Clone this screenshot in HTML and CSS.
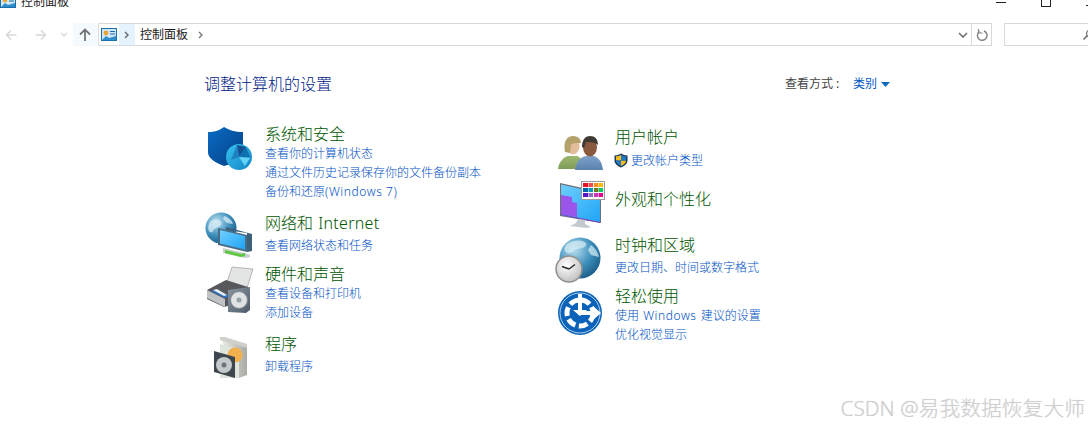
FILE: index.html
```html
<!DOCTYPE html>
<html lang="zh-CN">
<head>
<meta charset="utf-8">
<title>控制面板</title>
<link rel="stylesheet" href="styles.css">
</head>
<body>
<svg class="defs" width="0" height="0">
  <defs>
    <linearGradient id="gShield" x1="0" y1="0" x2="1" y2="1"><stop offset="0" stop-color="#0a6cc4"/><stop offset="1" stop-color="#043f86"/></linearGradient>
    <linearGradient id="gPie" x1="0" y1="0" x2="1" y2="1"><stop offset="0" stop-color="#39c0ee"/><stop offset="1" stop-color="#1285c8"/></linearGradient>
    <radialGradient id="gGlobe" cx=".35" cy=".3" r=".8"><stop offset="0" stop-color="#b9e0ef"/><stop offset=".55" stop-color="#3e8fbd"/><stop offset="1" stop-color="#14567f"/></radialGradient>
    <linearGradient id="gScreen" x1="0" y1="0" x2="1" y2="1"><stop offset="0" stop-color="#6fcfff"/><stop offset="1" stop-color="#1fa4f5"/></linearGradient>
    <linearGradient id="gMetal" x1="0" y1="0" x2="1" y2="1"><stop offset="0" stop-color="#8a97a3"/><stop offset="1" stop-color="#4d5a68"/></linearGradient>
    <linearGradient id="gBox" x1="0" y1="0" x2="1" y2="0"><stop offset="0" stop-color="#f0f0ea"/><stop offset="1" stop-color="#a9aaa4"/></linearGradient>
    <radialGradient id="gClock" cx=".4" cy=".35" r=".8"><stop offset="0" stop-color="#fff"/><stop offset="1" stop-color="#b4b4b4"/></radialGradient>
    <linearGradient id="gGreenShirt" x1="0" y1="0" x2="0" y2="1"><stop offset="0" stop-color="#9db770"/><stop offset="1" stop-color="#7f9d58"/></linearGradient>
    <linearGradient id="gBlueShirt" x1="0" y1="0" x2="0" y2="1"><stop offset="0" stop-color="#7ea1c9"/><stop offset="1" stop-color="#5b82ad"/></linearGradient>
  </defs>
</svg>

<header class="titlebar">
  <div class="title-left">
    <svg class="cp-icon" viewBox="0 0 16 13"><rect x=".5" y=".5" width="15" height="12" fill="#cfe6f7" stroke="#1c6ea8"/><circle cx="5" cy="5" r="2.4" fill="#e9a531"/><path d="M9 3h5M9 6h5" stroke="#1c6ea8"/><path d="M1 12l4-4 3 2 7-2v4z" fill="#2f8fce"/></svg>
    <span>控制面板</span>
  </div>
  <div class="win-controls">
    <span class="win-min"></span>
    <span class="win-max"></span>
    <span class="win-close"></span>
  </div>
</header>

<nav class="navbar">
  <svg class="nav-arrow" viewBox="0 0 12 12"><path d="M11.5 6H1.500M6 1.500L1.500 6 6 10.500" fill="none" stroke="#d9d9d9" stroke-width="1.600"/></svg>
  <svg class="nav-arrow fwd" viewBox="0 0 12 12"><path d="M.5 6h10M6 1.500L10.500 6 6 10.500" fill="none" stroke="#d9d9d9" stroke-width="1.600"/></svg>
  <svg class="nav-drop" viewBox="0 0 8 5"><path d="M1 1l3 3 3-3" fill="none" stroke="#d5d5d5" stroke-width="1.200"/></svg>
  <div class="nav-up"><svg viewBox="0 0 12 13" width="12" height="13"><path d="M6 13V2M1 6.500L6 1.500l5 5" fill="none" stroke="#747474" stroke-width="1.800"/></svg></div>
  <div class="address">
    <svg class="addr-icon" viewBox="0 0 16 13"><rect x=".5" y=".5" width="15" height="12" fill="#cfe6f7" stroke="#1c6ea8"/><circle cx="5" cy="5" r="2.400" fill="#e9a531"/><path d="M9 3.500h5M9 6h5" stroke="#1c6ea8"/><path d="M1 12l4-4 3 2 7-2v4z" fill="#2f8fce"/></svg>
    <div class="crumb-sep"><svg viewBox="0 0 5 8" width="5" height="8"><path d="M1 1l3 3-3 3" fill="none" stroke="#666" stroke-width="1.400"/></svg></div>
    <span class="crumb">控制面板</span>
    <svg class="crumb-end" viewBox="0 0 5 8" width="5" height="8"><path d="M1 1l3 3-3 3" fill="none" stroke="#777" stroke-width="1.400"/></svg>
    <svg class="addr-drop" viewBox="0 0 10 6" width="10" height="6"><path d="M1 1l4 4 4-4" fill="none" stroke="#707070" stroke-width="1.600"/></svg>
    <div class="addr-refresh"><svg viewBox="0 0 12 12" width="12" height="12"><path d="M3.500 2.500A4.800 4.800 0 1 0 8 2" fill="none" stroke="#808080" stroke-width="1.400"/><path d="M2.500 0v4h4" fill="none" stroke="#808080" stroke-width="1.200"/></svg></div>
  </div>
  <div class="search"><svg class="search-ico" viewBox="0 0 10 10" width="10" height="10"><circle cx="6.500" cy="3.500" r="3" fill="none" stroke="#808080" stroke-width="1.400"/><path d="M4.500 5.500L.5 9.500" stroke="#808080" stroke-width="1.800"/></svg></div>
</nav>

<main class="panel">
  <div class="panel-head">
    <h1>调整计算机的设置</h1>
    <div class="view-by">
      <span class="view-label">查看方式<span class="colon">:</span></span>
      <a class="view-value">类别</a>
      <svg class="view-arrow" viewBox="0 0 9 5" width="9" height="5"><path d="M0 0h9L4.500 5z" fill="#0f6cbd"/></svg>
    </div>
  </div>

  <div class="columns">
    <div class="col col-left">
      <section class="item i-security">
        <svg class="ico" viewBox="0 0 60 48">
          <path d="M3 8c7 0 12-2 16-5 5 3 11 5 19 5v20c0 7-7 11-19 14C9 38 3 34 3 28z" fill="url(#gShield)"/>
          <circle cx="34" cy="33" r="13" fill="url(#gPie)"/>
          <path d="M34 33l-2-12 9 2z" fill="#12508f"/>
          <path d="M34 33l-8 3 6-15z" fill="#1f80c0"/>
          <path d="M34 33l7-10 4 10z" fill="#0f6fb0"/>
          <path d="M34 33l11 1-5 8z" fill="#65d3f3"/>
        </svg>
        <div class="txt">
          <h2>系统和安全</h2>
          <a>查看你的计算机状态</a>
          <a>通过文件历史记录保存你的文件备份副本</a>
          <a>备份和还原<span class="lat">(Windows 7)</span></a>
        </div>
      </section>
      <section class="item i-network">
        <svg class="ico" viewBox="0 0 60 48">
          <circle cx="16" cy="15" r="15.500" fill="url(#gGlobe)"/>
          <path d="M6 8c4-3 8-2 10 1s-2 5-5 6-3 6-6 4-2-8 1-11zM19 3c4 1 8 4 9 8l-6-1-4-4z" fill="#d8eef5" opacity=".75"/>
          <path d="M21 14l26 7v17l-5 1V20l-21-3z" fill="#3c6178"/>
          <path d="M13 15l29 7v17L13 32z" fill="#4a6d85"/>
          <path d="M15 17l25 6v13.500l-25-6z" fill="url(#gScreen)"/>
          <path d="M18 35l22 5 5 2v2l-5 1-22-5z" fill="#c9ced1"/>
          <path d="M20 37l16 4 4-1v3l-4 1-16-4z" fill="#5cc83e"/>
        </svg>
        <div class="txt">
          <h2>网络和<span class="sp"> </span><span class="lat-title">Internet</span></h2>
          <a>查看网络状态和任务</a>
        </div>
      </section>
      <section class="item i-hardware">
        <svg class="ico" viewBox="0 0 60 48">
          <path d="M27 3l21 2-6 19-21-3z" fill="#e3e5e5" stroke="#8d8d8d" stroke-width=".6"/>
          <path d="M2 26l19-10 22 7v14l-24 6-17-8z" fill="#56585c"/>
          <path d="M2 26l18 9v8L2 34z" fill="#bfc2c4"/>
          <path d="M6 27l14 7 5-2-14-6z" fill="#2a72c6"/>
          <path d="M8 26l11 6 3-1-10-6z" fill="#e7eef5"/>
          <path d="M23 26l22-3v23l-4 3-18-1z" fill="url(#gMetal)"/>
          <circle cx="34" cy="36" r="8.500" fill="#dfe3e4" stroke="#7d858c"/>
          <circle cx="34" cy="36" r="2.500" fill="#98a1a8"/>
        </svg>
        <div class="txt">
          <h2>硬件和声音</h2>
          <a>查看设备和打印机</a>
          <a>添加设备</a>
        </div>
      </section>
      <section class="item i-programs">
        <svg class="ico" viewBox="0 0 60 48">
          <path d="M15 3l27 8v30l-8 3z" fill="url(#gBox)"/>
          <path d="M15 3l5 0 22 7v4L15 6z" fill="#cfd0cb"/>
          <path d="M15 10l19 5v29H15z" fill="#dfe5dc"/>
          <circle cx="30" cy="21" r="7.500" fill="#f2b04f"/>
          <path d="M9 17l21 6v21L9 38z" fill="#3f474e"/>
          <circle cx="19" cy="31" r="8" fill="#c4c9cb"/>
          <circle cx="19" cy="31" r="2.500" fill="#6b7278"/>
        </svg>
        <div class="txt">
          <h2>程序</h2>
          <a>卸载程序</a>
        </div>
      </section>
    </div>

    <div class="col col-right">
      <section class="item i-users">
        <svg class="ico" viewBox="0 0 60 48">
          <path d="M3 42c1-8 6-12 10-13h9c5 2 7 6 8 13z" fill="url(#gGreenShirt)"/>
          <ellipse cx="18" cy="19" rx="6.500" ry="8.500" fill="#e2bd9b"/>
          <path d="M10 25c-2-11 2-16 8-16 6 0 8 4 8 7-5 0-9 0-10 2l-1 8z" fill="#b5a16a"/>
          <path d="M20 43c1-9 6-13 11-14h8c5 2 8 6 9 14z" fill="url(#gBlueShirt)"/>
          <ellipse cx="35" cy="20" rx="7" ry="9.500" fill="#8a5a3f"/>
          <path d="M27 20c0-8 4-11 8-11 5 0 8 3 8 9-3-3-8-3-12-3l-2 6z" fill="#403a34"/>
        </svg>
        <div class="txt">
          <h2>用户帐户</h2>
          <a class="uac"><svg viewBox="0 0 14 15" width="14" height="15"><path d="M7 .5c2 1.200 4 2 6.500 2v5c0 3.500-3 5.500-6.500 7C3.500 13 .5 11 .5 7.500v-5C3 2.500 5 1.700 7 .5z" fill="#1e3c5c"/><path d="M7 2v5.500H2V3.300C4 3.300 5.500 2.800 7 2zM7 7.500h5c0 2.800-2.500 4.300-5 5.500z" fill="#f6bd1c"/><path d="M7 2c1.500.8 3 1.300 5 1.300v4.200H7zM7 7.500V13C4.500 11.800 2 10.300 2 7.500z" fill="#1f78c8"/></svg><span>更改帐户类型</span></a>
        </div>
      </section>
      <section class="item i-appearance">
        <svg class="ico" viewBox="0 0 60 48">
          <path d="M5 -6l41 9v31L5 27z" fill="#6c7276"/>
          <path d="M6 -4.500l39 8.500v29L6 26z" fill="url(#gScreen)"/>
          <path d="M6 6l11 2v5l5 1v14L6 25z" fill="#9a55ea"/>
          <path d="M6 25l39 8v1L6 26z" fill="#7b3fd0"/>
          <path d="M23 30l7 1v4l6 3-4 1-17-2 6-3z" fill="#c2cad0"/>
          <rect x="26.500" y="-7.500" width="23" height="18" fill="#fff" stroke="#9c9c9c"/>
          <g class="swatches">
            <rect x="28" y="-6" width="5" height="4" fill="#e81123"/><rect x="33.500" y="-6" width="4.500" height="4" fill="#f04b4b"/><rect x="39" y="-6" width="4.500" height="4" fill="#f7901e"/><rect x="44" y="-6" width="4" height="4" fill="#fbb900"/>
            <rect x="28" y="-1" width="5" height="4" fill="#0063b1"/><rect x="33.500" y="-1" width="4.500" height="4" fill="#0099bc"/><rect x="39" y="-1" width="4.500" height="4" fill="#6b7a1a"/><rect x="44" y="-1" width="4" height="4" fill="#00cc6a"/>
            <rect x="28" y="4" width="5" height="4" fill="#5a13c8"/><rect x="33.500" y="4" width="4.500" height="4" fill="#8e6cc0"/><rect x="39" y="4" width="4.500" height="4" fill="#c239b3"/><rect x="44" y="4" width="4" height="4" fill="#e3008c"/>
          </g>
        </svg>
        <div class="txt">
          <h2>外观和个性化</h2>
        </div>
      </section>
      <section class="item i-clock">
        <svg class="ico" viewBox="0 0 60 48">
          <circle cx="25" cy="23" r="20.500" fill="url(#gGlobe)"/>
          <path d="M12 9c6-4 14-5 19-1 2 4-5 6-9 6s-4 5-9 4-4-6-1-9zM36 10c4 3 7 7 8 12l-8-2-3-5z" fill="#d8eef5" opacity=".7"/>
          <circle cx="14" cy="34" r="13" fill="url(#gClock)" stroke="#8f8f8f" stroke-width="1.500"/>
          <path d="M14 34l-7-2.500M14 34l6-4.500" stroke="#2b2b2b" stroke-width="1.500" fill="none"/>
        </svg>
        <div class="txt">
          <h2>时钟和区域</h2>
          <a>更改日期、时间或数字格式</a>
        </div>
      </section>
      <section class="item i-ease">
        <svg class="ico" viewBox="0 0 60 48">
          <circle cx="25" cy="27" r="22" fill="#0a63b8"/>
          <circle cx="25" cy="27" r="20" fill="none" stroke="#d8e8f6" stroke-width=".8"/>
          <circle cx="25" cy="27" r="13" fill="none" stroke="#fff" stroke-width="5" stroke-dasharray="9 3.500"/>
          <path d="M25 8v19h15" fill="none" stroke="#fff" stroke-width="4"/>
          <path d="M38 20l8 7-8 7zM18 24l7 6 7-6z" fill="#fff"/>
        </svg>
        <div class="txt">
          <h2>轻松使用</h2>
          <a>使用<span class="sp"> </span><span class="lat">Windows</span><span class="sp"> </span>建议的设置</a>
          <a>优化视觉显示</a>
        </div>
      </section>
    </div>
  </div>
</main>

<div class="watermark">CSDN @易我数据恢复大师</div>
</body>
</html>
```

FILE: styles.css
```css
* { box-sizing: border-box; }
html, body { margin: 0; padding: 0; }
body {
  width: 1088px;
  height: 426px;
  overflow: hidden;
  position: relative;
  background: #fff;
  font-family: "Noto Sans", "Noto Sans CJK SC", sans-serif;
  font-size: 12px;
  color: #1a1a1a;
}
.defs { position: absolute; }

/* title bar, cut off by the top edge */
.titlebar {
  height: 10px;
  overflow: hidden;
  display: flex;
  justify-content: space-between;
}
.title-left {
  display: flex;
  align-items: center;
  gap: 5px;
  height: 12px;
  margin-top: -4px;
  line-height: 12px;
}
.cp-icon { width: 16px; height: 13px; margin-top: -1px; flex: none; }
.win-controls { display: flex; align-items: flex-start; }
.win-min { width: 10px; height: 1px; margin-top: 2px; margin-right: 35px; background: #222; }
.win-max { width: 10px; height: 7px; border: 1px solid #222; border-top: 0; margin-right: 35px; }
.win-close { width: 2px; height: 1px; margin-top: 5px; background: #222; }

/* navigation bar */
.navbar {
  height: 23px;
  margin-top: 13px;
  display: flex;
  align-items: center;
}
.nav-arrow { width: 12px; height: 12px; margin-left: 5px; }
.nav-arrow.fwd { margin-left: 18px; }
.nav-drop { width: 8px; height: 5px; margin-left: 13px; }
.nav-up {
  width: 24px;
  height: 23px;
  margin-left: 5px;
  background: #f5faff;
  display: flex;
  align-items: center;
  justify-content: center;
}
.address {
  width: 895px;
  height: 23px;
  margin-left: 1px;
  border: 1px solid #d9d9d9;
  display: flex;
  align-items: center;
}
.addr-icon { width: 16px; height: 13px; margin-left: 2px; flex: none; }
.crumb-sep {
  width: 16px;
  height: 21px;
  margin-left: 2px;
  background: #e5f3ff;
  display: flex;
  align-items: center;
  justify-content: center;
}
.crumb { margin-left: 5px; line-height: 21px; color: #1a1a1a; }
.crumb-end { margin-left: 10px; }
.addr-drop { margin-left: auto; margin-right: 3px; }
.addr-refresh {
  width: 20px;
  height: 21px;
  border-left: 1px solid #d9d9d9;
  display: flex;
  align-items: center;
  justify-content: center;
}
.search {
  width: 84px;
  height: 23px;
  margin-left: 12px;
  border: 1px solid #d9d9d9;
  border-right: 0;
  display: flex;
  align-items: center;
  justify-content: flex-end;
  overflow: hidden;
}
.search-ico { flex: none; margin-right: -5px; }

/* main panel */
.panel { padding: 27px 0 0 205px; }
.panel-head {
  width: 685px;
  height: 22px;
  display: flex;
  justify-content: space-between;
  align-items: center;
}
h1 {
  margin: 0 0 0 -1px;
  font-size: 16px;
  font-weight: 300;
  line-height: 22px;
  color: #002288;
}
.view-by { display: flex; align-items: center; }
.view-label { width: 68px; color: #444; line-height: 18px; font-size: 12px; }
.colon { margin-left: 3px; }
.view-value { color: #0058c4; line-height: 18px; }
.view-arrow { margin-left: 4px; }

.columns {
  display: flex;
  margin-top: 29px;
}
.col { display: flex; flex-direction: column; }
.col-left { width: 350px; }
.col-right { padding-top: 3px; }

.item { display: flex; }
.ico {
  width: 60px;
  height: 48px;
  margin-bottom: -48px;
  flex: none;
  overflow: visible;
}
.txt { display: flex; flex-direction: column; }
h2 {
  margin: 0;
  font-size: 16px;
  font-weight: 300;
  line-height: 20px;
  color: #005500;
}
.txt a {
  color: #0052c4;
  line-height: 19px;
  white-space: nowrap;
  font-weight: 300;
}
.lat { letter-spacing: .6px; }
.lat-title { letter-spacing: .3px; }
.sp { padding-left: 1px; }
.uac { display: flex; align-items: center; margin-left: -1px; margin-top: 4px; }
.uac span { margin-left: 3px; }

/* vertical rhythm of the category lists */
.i-network { margin-top: 12px; }
.i-network h2 { margin-bottom: 3px; }
.i-hardware { margin-top: 9px; }
.i-programs { margin-top: 12px; }
.i-programs h2 { margin-bottom: 3px; }

.i-appearance { margin-top: 19px; }
.i-clock { margin-top: 26px; }
.i-clock h2 { margin-bottom: 3px; }
.i-ease { margin-top: 9px; }

/* overlaid watermark */
.watermark {
  position: absolute;
  right: 3px;
  top: 395px;
  font-size: 20.800px;
  font-weight: 300;
  line-height: 26px;
  color: #cfcfcf;
  text-shadow: 0 0 1px #dcdcdc;
  white-space: nowrap;
}
```
